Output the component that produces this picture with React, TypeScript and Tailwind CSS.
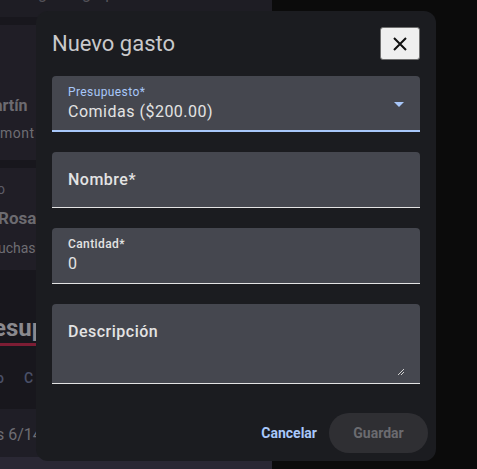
import React from 'react';

const font = { fontFamily: 'Roboto, "Noto Sans", sans-serif' };

const BackgroundPage = () => (
  <div className="flex h-[469px] w-[477px] overflow-hidden" style={font}>
    <div className="flex w-[272px] flex-col bg-[#18171d]">
      <div className="h-[17px] overflow-hidden bg-[#1e1d24] pl-[38px]">
        <div className="-mt-[16px] text-[16px] leading-[20px] text-[#55545a]">gasto grupo</div>
      </div>
      <div className="mt-[8px] flex h-[135px] flex-col bg-[#201e26]">
        <div className="-ml-[6px] mt-[70px] text-[16px] font-bold leading-[22px] text-[#6c6b70]">artín</div>
        <div className="mt-[6px] text-[14px] leading-[20px] tracking-[0.5px] text-[#6e6d73]">mont</div>
      </div>
      <div className="mt-[8px] flex h-[102px] flex-col bg-[#201e26]">
        <div className="-ml-[3px] mt-[16px] text-[14px] leading-[10px] text-[#5d5c66]">o</div>
        <div className="-ml-[2px] mt-[12px] text-[17px] font-bold leading-[24px] text-[#6c6b70]">Rosa</div>
        <div className="-ml-[2px] mt-[8px] text-[14px] leading-[20px] text-[#6e6d73]">uchas</div>
      </div>
      <div className="mt-[44px] w-fit">
        <div className="-ml-[7px] text-[24px] font-bold leading-[28px] text-[#8a898e]">esup</div>
        <div className="mt-[1px] h-[3px] w-[40px] bg-[#7d1d34]"></div>
      </div>
      <div className="mt-[22px] flex items-center gap-[20px] text-[14px] font-medium text-[#4a5068]">
        <span className="-ml-[4px]">o</span>
        <span>C</span>
      </div>
      <div className="mt-[20px] h-[48px] bg-[#1f1e26] pt-[16px]">
        <div className="-ml-[4px] text-[16px] leading-[20px] text-[#6e6d73]">s 6/14</div>
      </div>
      <div className="flex-1 bg-[#2a2834]"></div>
    </div>
    <div className="flex-1 bg-[#0b0b0b]"></div>
  </div>
);

const Field = ({ label, value, active }: { label: string; value?: string; active?: boolean }) => (
  <div
    className={`relative h-[56px] rounded-t-[4px] bg-[#45474f] px-[16px] ${
      active ? 'border-b-2 border-[#a8c7fa]' : 'border-b border-[#e3e3e3]'
    }`}
  >
    {value !== undefined ? (
      <div className="pt-[8px]">
        <div
          className={`text-[12px] leading-[16px] tracking-[0.4px] ${
            active ? 'text-[#a8c7fa]' : 'font-medium text-[#e3e3e3]'
          }`}
        >
          {label}
        </div>
        <div className="text-[16px] leading-[24px] tracking-[0.5px] text-[#e3e3e3]">{value}</div>
      </div>
    ) : (
      <div className="flex h-full items-center text-[16px] font-medium tracking-[0.5px] text-[#e3e3e3]">
        {label}
      </div>
    )}
    {active && (
      <svg className="absolute right-[16px] top-[26px]" width="10" height="5" viewBox="0 0 10 5">
        <path d="M0 0h10L5 5z" fill="#a8c7fa" />
      </svg>
    )}
  </div>
);

export default function App() {
  return (
    <div className="relative h-[469px] w-[477px] overflow-hidden bg-[#0b0b0b]" style={font}>
      <BackgroundPage />
      <div className="absolute left-[36px] top-[11px] flex h-[450px] w-[400px] flex-col rounded-[12px] bg-[#1b1c20] pb-[8px] pt-[16px]">
        <div className="flex h-[33px] items-center justify-between px-[16px]">
          <h2 className="text-[22px] leading-[32px] text-[#c9c9cb]">Nuevo gasto</h2>
          <button className="flex h-[33px] w-[40px] items-center justify-center rounded-[3px] border border-[#6e6e6e] bg-[#efefef]">
            <svg width="14" height="14" viewBox="0 0 14 14">
              <path d="M1 1l12 12M13 1L1 13" stroke="#111" strokeWidth="2" />
            </svg>
          </button>
        </div>
        <div className="mt-[16px] flex flex-col gap-[20px] px-[16px]">
          <Field label="Presupuesto*" value="Comidas ($200.00)" active />
          <Field label="Nombre*" />
          <Field label="Cantidad*" value="0" />
          <div className="relative h-[80px] rounded-t-[4px] border-b border-[#e3e3e3] bg-[#45474f] px-[16px] pt-[16px]">
            <div className="text-[16px] font-medium leading-[24px] tracking-[0.5px] text-[#e3e3e3]">Descripción</div>
            <svg className="absolute bottom-[7px] right-[15px]" width="8" height="8" viewBox="0 0 8 8">
              <path d="M1 7L7 1M4 7L7 4" stroke="#d0d0d0" strokeWidth="1" />
            </svg>
          </div>
        </div>
        <div className="mt-auto flex items-center justify-end pr-[8px]">
          <button className="h-[40px] px-[12px] text-[14px] font-bold text-[#a8c7fa]">Cancelar</button>
          <button className="h-[40px] w-[99px] rounded-full bg-[#2f2f33] text-[14px] font-bold text-[#6b6b70]">
            Guardar
          </button>
        </div>
      </div>
    </div>
  );
}
